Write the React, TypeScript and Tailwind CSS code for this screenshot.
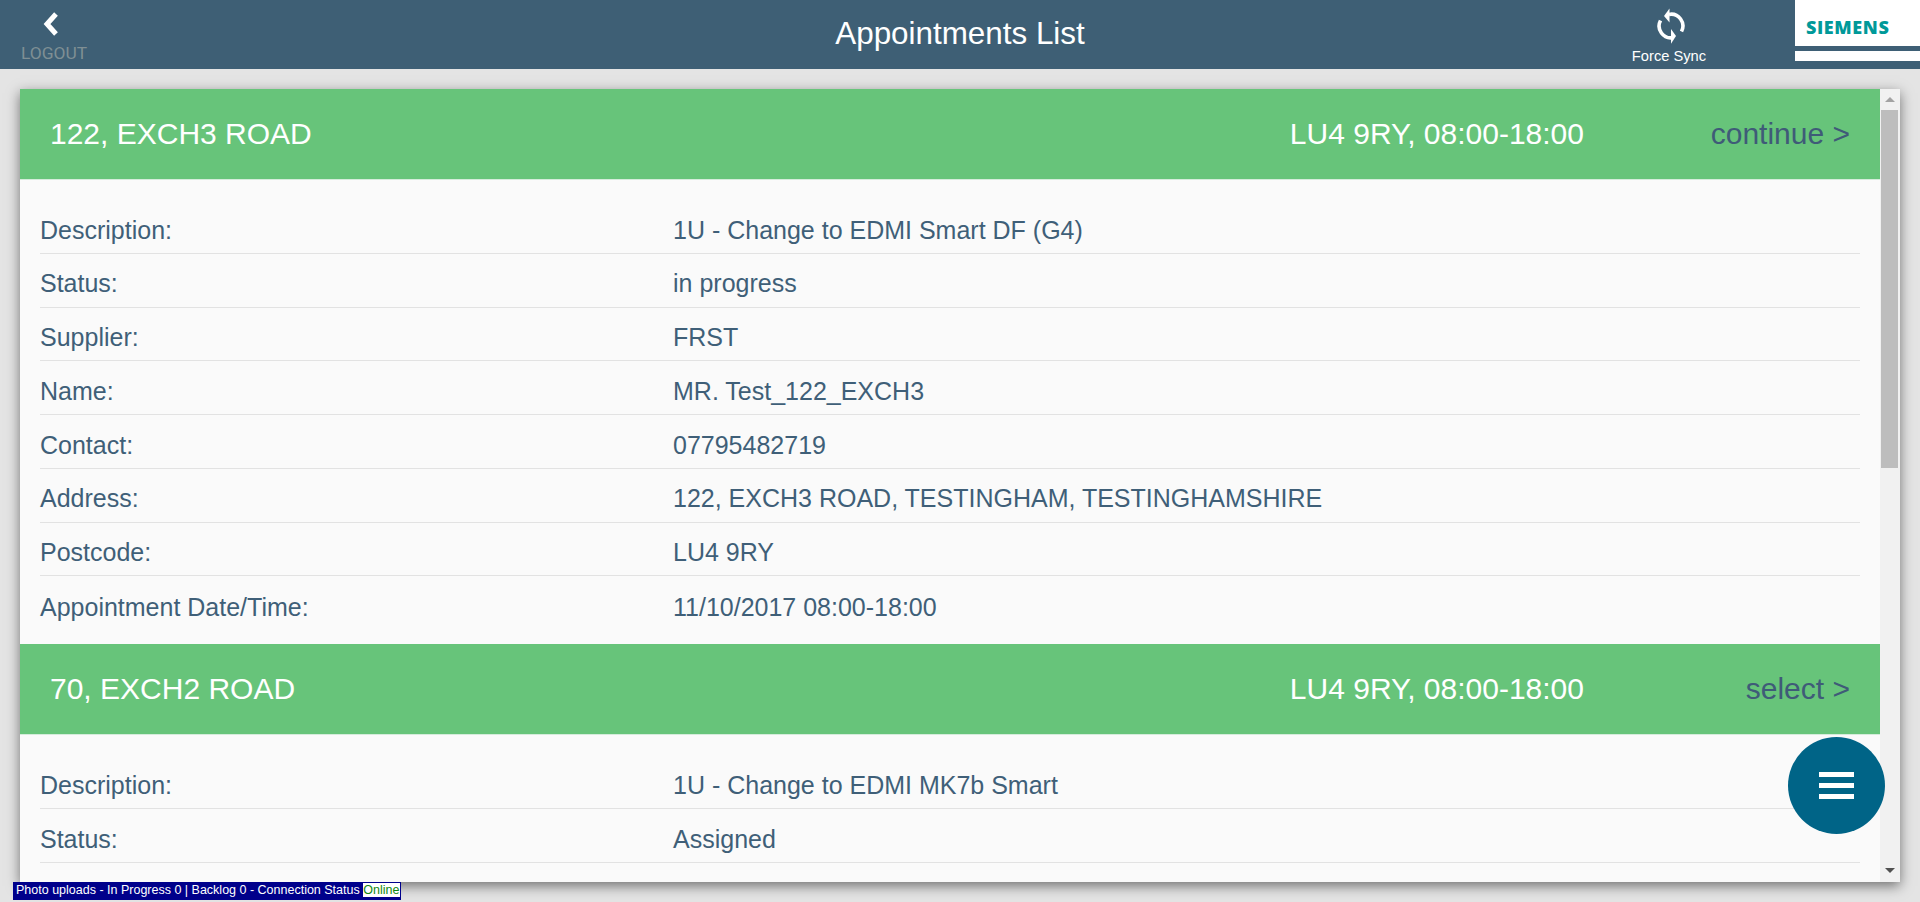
const rowsOne = [
  ["Description:", "1U - Change to EDMI Smart DF (G4)"],
  ["Status:", "in progress"],
  ["Supplier:", "FRST"],
  ["Name:", "MR. Test_122_EXCH3"],
  ["Contact:", "07795482719"],
  ["Address:", "122, EXCH3 ROAD, TESTINGHAM, TESTINGHAMSHIRE"],
  ["Postcode:", "LU4 9RY"],
  ["Appointment Date/Time:", "11/10/2017 08:00-18:00"],
];

const rowsTwo = [
  ["Description:", "1U - Change to EDMI MK7b Smart"],
  ["Status:", "Assigned"],
];

function Appointment({
  title,
  action,
  rows,
  cutOff,
}: {
  title: string;
  action: string;
  rows: string[][];
  cutOff?: boolean;
}) {
  return (
    <section>
      {/* Green heading */}
      <div className="flex h-[91px] items-center border-b border-[#d5ecdb] bg-[#67c47a] text-[30px] leading-none">
        <div className="flex-1 pl-[30px] text-white">{title}</div>
        <div className="text-white">LU4 9RY, 08:00-18:00</div>
        <div className="w-[296px] pr-[30px] text-right text-[#3f5b78]">{action}</div>
      </div>

      {/* Details */}
      <div className="px-[20px] pt-[20px] pb-[14px]">
        {rows.map((row, i) => (
          <div
            key={row[0]}
            className={
              i < rows.length - 1 || cutOff
                ? "flex h-[53.75px] items-center border-b border-[#e2e2e2] pt-[8px] text-[25px]"
                : "flex h-[54px] items-center pt-[8px] text-[25px]"
            }
          >
            <div className="w-[633px]">{row[0]}</div>
            <div>{row[1]}</div>
          </div>
        ))}
      </div>
    </section>
  );
}

export default function App() {
  return (
    <div className="flex h-[902px] flex-col overflow-hidden bg-[#e4e4e4] font-['Liberation_Sans',Arial,sans-serif] text-[#3f5f78]">
      {/* Header */}
      <header className="grid h-[69px] shrink-0 grid-cols-[1fr_auto_1fr] bg-[#3e5f75]">
        <div className="ml-[21px] flex w-[66px] flex-col items-center pt-[11px]">
          <svg width="20" height="26" viewBox="0 0 20 26" className="-ml-1">
            <path d="M14 3 L5 13 L14 23" fill="none" stroke="#fff" strokeWidth="5" />
          </svg>
          <span className="mt-[8px] font-['Roboto',sans-serif] text-[17.4px] leading-none text-[#7f8f94]">
            LOGOUT
          </span>
        </div>

        <h1 className="pt-[18px] text-[31.4px] leading-none text-white">Appointments List</h1>

        <div className="flex justify-end">
          <div className="mr-[88px] flex w-[76px] flex-col items-center pt-[8px]">
            <svg width="30" height="38" viewBox="0 0 30 38" className="ml-[3px]">
              <path d="M13 6.4 A11.8 11.8 0 0 1 25.5 23.5" fill="none" stroke="#fff" strokeWidth="3.6" />
              <path d="M8 8 L13.5 0.5 L13.5 14.5 Z" fill="#fff" />
              <path d="M17 29.6 A11.8 11.8 0 0 1 4.5 12.5" fill="none" stroke="#fff" strokeWidth="3.6" />
              <path d="M20 28 L15 21 L15 35.7 Z" fill="#fff" />
            </svg>
            <span className="mt-[3px] text-[14.7px] leading-none text-white">Force Sync</span>
          </div>

          <div className="h-[61px] w-[125px] bg-white">
            <div className="flex h-[46px] items-center pt-[9px] pl-[11px] font-['Open_Sans',sans-serif] text-[18px] font-extrabold tracking-[0.6px] text-[#009999]">
              SIEMENS
            </div>
            <div className="h-[5px] bg-[#3e5f75]" />
          </div>
        </div>
      </header>

      {/* Panel with the list and its scrollbar */}
      <main className="relative mt-[20px] ml-[20px] flex h-[793px] w-[1880px] shrink-0 bg-[#fafafa] shadow-[0_4px_12px_rgba(0,0,0,0.5)]">
        <div className="min-w-0 flex-1 overflow-hidden">
          <Appointment title="122, EXCH3 ROAD" action="continue >" rows={rowsOne} />
          <Appointment title="70, EXCH2 ROAD" action="select >" rows={rowsTwo} cutOff />
        </div>

        <div className="flex w-[20px] shrink-0 flex-col items-center bg-[#f1f1f1]">
          <div className="mt-[8px] h-0 w-0 border-x-[5px] border-b-[5px] border-x-transparent border-b-[#a3a3a3]" />
          <div className="mt-[8px] ml-[-1px] h-[358px] w-[17px] bg-[#bdbdbd]" />
          <div className="mt-auto mb-[9px] h-0 w-0 border-x-[5px] border-t-[5px] border-x-transparent border-t-[#505050]" />
        </div>

        <button className="absolute top-[648px] left-[1768px] flex h-[97px] w-[97px] flex-col items-center justify-center gap-[6px] rounded-full bg-[#006487]">
          <span className="h-[5px] w-[35px] bg-white" />
          <span className="h-[5px] w-[35px] bg-white" />
          <span className="h-[5px] w-[35px] bg-white" />
        </button>
      </main>

      {/* Upload status */}
      <div className="relative ml-[13px] flex h-[18px] w-[388px] items-start bg-[#00008b] pt-[1px] pl-[3px] text-[12.5px] leading-[14px] whitespace-nowrap text-white">
        <span>Photo uploads - In Progress 0 | Backlog 0 - Connection Status&nbsp;</span>
        <span className="bg-white pr-[1px] text-[#118811]">Online</span>
      </div>
    </div>
  );
}
